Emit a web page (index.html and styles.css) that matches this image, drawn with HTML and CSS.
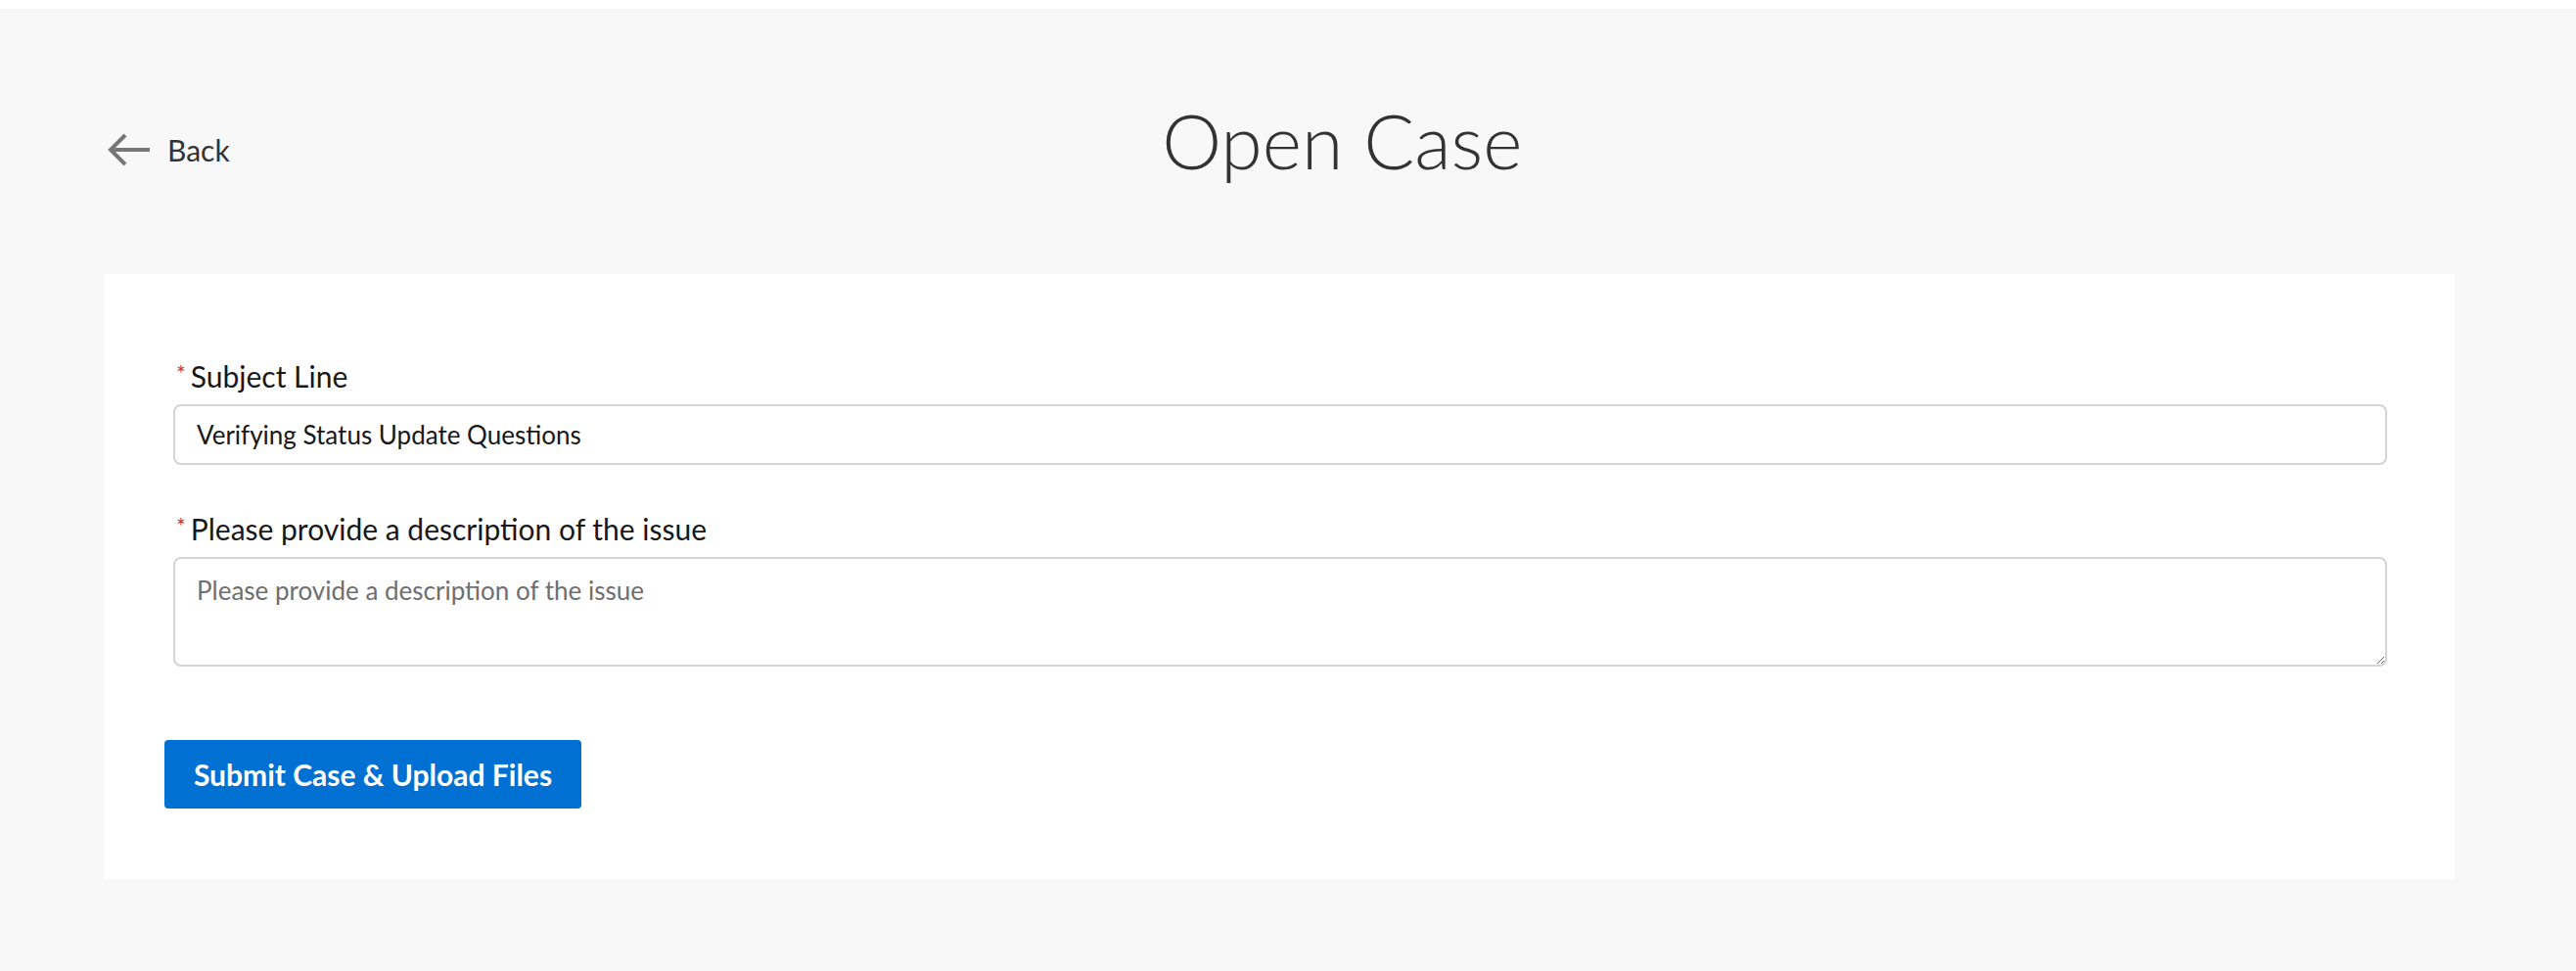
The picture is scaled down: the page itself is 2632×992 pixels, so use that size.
FILE: index.html
```html
<!DOCTYPE html>
<html>
	<head>
		<meta charset="utf-8">
		<meta name="viewport" content="width=device-width, initial-scale=1">
		<title>Open Case</title>
		<link rel="stylesheet" href="styles.css">
	</head>
	<body>
		<div class="page">
			<div class="header">
				<a class="back" href="#">
					<svg width="46" height="36" viewBox="0 0 46 36">
						<path d="M5 18 H46 M21 3 L6 18 L21 33" fill="none" stroke="#767676" stroke-width="4"/>
					</svg>
					<span>Back</span>
				</a>
				<h1>Open Case</h1>
			</div>

			<div class="card">
				<div class="field">
					<label><abbr>*</abbr>Subject Line</label>
					<input type="text" value="Verifying Status Update Questions">
				</div>
				<div class="field">
					<label><abbr>*</abbr>Please provide a description of the issue</label>
					<textarea placeholder="Please provide a description of the issue"></textarea>
				</div>
				<button class="submit">Submit Case &amp; Upload Files</button>
			</div>
		</div>
	</body>
</html>
```

FILE: styles.css
```css
body{
	margin: 0;
	padding-top: 9px;
	background: #fff;
	font-family: "Lato", "Liberation Sans", sans-serif;
	color: #181818;
}
.page{
	background: #f8f8f8;
	padding: 0 124px 94px 107px;
	min-height: 889px;
	box-sizing: border-box;
}
.header{
	display: flex;
	align-items: flex-start;
	padding: 94px 0 97px 0;
}
.back{
	display: flex;
	align-items: center;
	gap: 18px;
	margin-top: 32px;
	height: 36px;
	color: #333;
	font-size: 30px;
	line-height: 36px;
	text-decoration: none;
}
.back svg{
	display: block;
}
h1{
	flex: 1;
	margin: 0;
	text-align: center;
	font-size: 77px;
	font-weight: 300;
	line-height: 80px;
	color: #333;
}
.card{
	background: #fff;
	padding: 86px 69px 72px 70px;
}
.field{
	margin-bottom: 47px;
}
label{
	display: block;
	font-size: 30px;
	line-height: 36px;
	margin-bottom: 11px;
}
abbr{
	color: #d0312d;
	font-size: 23px;
	vertical-align: top;
	line-height: 30px;
	margin: 0 5px 0 3px;
}
input, textarea{
	display: block;
	width: 100%;
	box-sizing: border-box;
	border: 2px solid #d4d4d4;
	border-radius: 8px;
	background: #fff;
	font-family: "Lato", "Liberation Sans", sans-serif;
	font-size: 26px;
	line-height: 39px;
	color: #181818;
	padding: 0 22px;
	margin: 0;
}
input{
	height: 62px;
}
textarea{
	height: 112px;
	padding-top: 13px;
	resize: vertical;
}
textarea::placeholder{
	color: #6f6f6f;
}
.field:last-of-type{
	margin-bottom: 75px;
}
.submit{
	display: block;
	margin-left: -9px;
	width: 426px;
	height: 70px;
	background: #0070d2;
	color: #fff;
	border: none;
	border-radius: 4px;
	font-family: "Lato", "Liberation Sans", sans-serif;
	font-size: 30px;
	font-weight: bold;
	padding: 0;
}
```
